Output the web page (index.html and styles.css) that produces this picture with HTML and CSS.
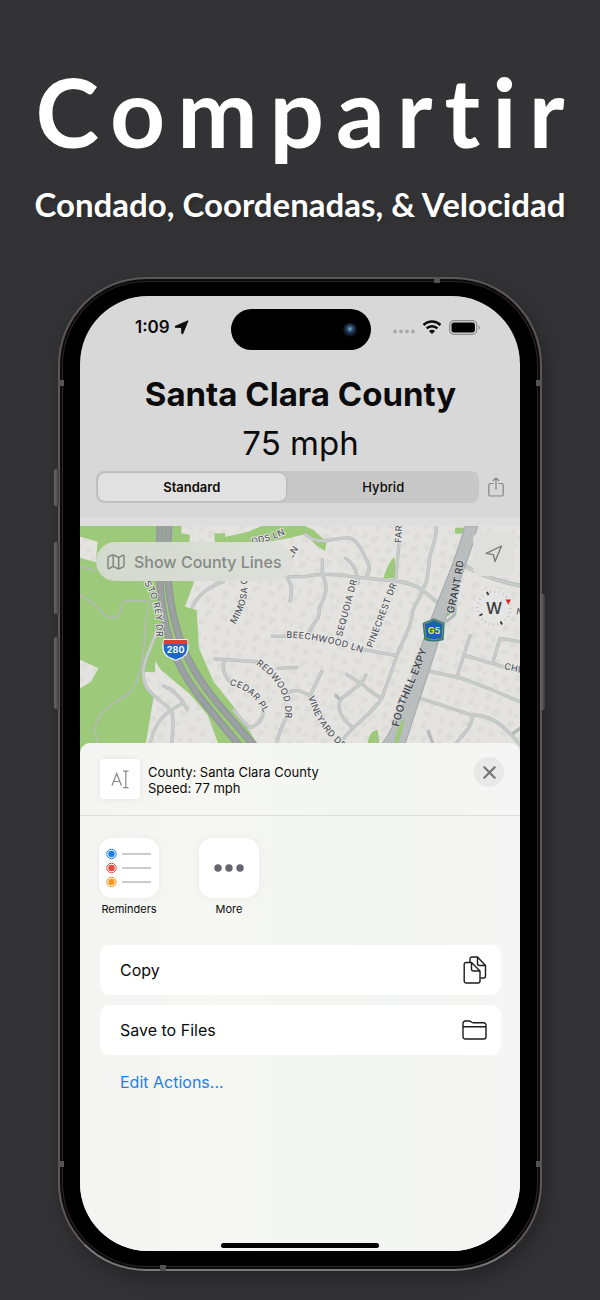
FILE: index.html
```html
<!DOCTYPE html>
<html lang="es">
  <head>
    <meta charset="utf-8" />
    <meta name="viewport" content="width=device-width, initial-scale=1" />
    <title>Compartir</title>
    <link rel="stylesheet" href="styles.css" />
  </head>
  <body>
    <header class="promo">
      <h1 class="promo-title">Compartir</h1>
      <p class="promo-subtitle">Condado, Coordenadas, &amp; Velocidad</p>
    </header>

    <main class="phone">
      <!-- side buttons and antenna bands -->
      <span class="side-key key-mute"></span>
      <span class="side-key key-up"></span>
      <span class="side-key key-down"></span>
      <span class="side-key key-power"></span>
      <span class="band band-left-top"></span>
      <span class="band band-right-top"></span>
      <span class="band band-left-bottom"></span>
      <span class="band band-right-bottom"></span>
      <span class="band band-top"></span>
      <span class="band band-bottom"></span>

      <div class="screen">
        <section class="top">
          <div class="status">
            <div class="status-side">
              <span class="clock">1:09</span>
              <svg width="15" height="15" viewBox="0 0 15 15"><path d="M14 .8 8.800 13.500C8.500 14.200 7.700 14.100 7.700 13.300V7.500L1.600 7.300C.8 7.300.7 6.500 1.400 6.200Z" fill="#0b0b0b" stroke="#0b0b0b" stroke-width=".9" stroke-linejoin="round" /></svg>
            </div>
            <div class="island"><span class="lens"></span></div>
            <div class="status-side status-right">
              <svg width="22" height="5" viewBox="0 0 22 5" fill="#aaa"><circle cx="2" cy="2.500" r="1.900" /><circle cx="8" cy="2.500" r="1.900" /><circle cx="14" cy="2.500" r="1.900" /><circle cx="20" cy="2.500" r="1.900" /></svg>
              <svg class="wifi" width="20" height="15" viewBox="0 0 20 15"><path d="M1.500 5C6.300.3 13.700.3 18.500 5M4.600 8.300c3.100-2.900 7.700-2.900 10.800 0" fill="none" stroke="#0b0b0b" stroke-width="2.500" /><path d="M6.900 10.900c1.800-1.600 4.400-1.600 6.200 0L10 14Z" fill="#0b0b0b" /></svg>
              <svg width="32" height="15" viewBox="0 0 32 15"><rect x=".7" y=".7" width="27" height="13.600" rx="4.300" fill="none" stroke="#8c8c8c" stroke-width="1.200" /><rect x="2.500" y="2.500" width="23.400" height="10" rx="2.700" fill="#000" /><path d="M29.500 5.200c1.900.8 1.900 3.800 0 4.600Z" fill="#8c8c8c" /></svg>
            </div>
          </div>

          <h2 class="county">Santa Clara County</h2>
          <p class="speed">75 mph</p>

          <div class="toolbar">
            <div class="segmented">
              <label class="segment"><input type="radio" name="map-type" checked /><span>Standard</span></label>
              <label class="segment"><input type="radio" name="map-type" /><span>Hybrid</span></label>
            </div>
            <button class="share" type="button" aria-label="Share">
              <svg width="18" height="20" viewBox="0 0 18 20" fill="none" stroke="#858585" stroke-width="1.200" stroke-linecap="round" stroke-linejoin="round"><path d="M6 6.500H3.400A1.600 1.600 0 0 0 1.800 8.100V17.400A1.600 1.600 0 0 0 3.400 19H14.600A1.600 1.600 0 0 0 16.200 17.400V8.100A1.600 1.600 0 0 0 14.600 6.500H12M9 12.500V1M6.200 3.700 9 1 11.800 3.700" /></svg>
            </button>
          </div>
        </section>

        <section class="map">
          <svg class="map-canvas" viewBox="15 33 1320 681" preserveAspectRatio="xMidYMin slice">
            <defs>
              <pattern id="houses" width="120" height="104" patternUnits="userSpaceOnUse" patternTransform="rotate(14)">
                <path d="M8 8h18v14h-9v8H8ZM44 14h14v18H44ZM78 5h22v13H78ZM12 46h14v18H12ZM40 52h22v12h-7v8H40ZM80 38h15v20H80ZM102 52h12v12h-12ZM18 82h22v13H18ZM60 84h14v13H60ZM90 76h20v12h-8v8H90Z" fill="#dcdcd9" />
              </pattern>
              <path id="monte" d="M207 204C232 242 246 290 243 356V440" />
              <path id="woods" d="M530 88Q575 83 620 62L690 30" />
              <path id="mimosa" d="M480 328C502 296 522 250 516 190L500 120" />
              <path id="beech" d="M634 368Q730 370 850 410L950 443" />
              <path id="redwood" d="M543 448C590 480 632 525 630 592V680" />
              <path id="cedar" d="M463 510Q525 523 555 574L595 650" />
              <path id="vineyard" d="M700 545C715 600 740 645 790 690L850 745" />
              <path id="foothill" d="M972 636C985 560 1025 500 1058 398L1090 300" />
              <path id="grant" d="M1136 296C1145 250 1160 195 1166 134L1174 50" />
            </defs>

            <rect x="0" y="0" width="1350" height="730" fill="#e4e3e0" />
            <rect x="0" y="0" width="1350" height="730" fill="url(#houses)" />

            <!-- parks -->
            <g fill="#9dca7a">
              <path d="M15 33H320L318 55 345 60 343 85 356 205 330 275 365 285 372 400 416 500 480 580 565 714H15Z" />
              <path d="M418 55H450V66L520 50 560 33H690L715 45 755 80 750 108 725 92 690 58 640 70 560 84 420 88Z" />
              <path d="M958 125 967 190H925Q940 140 958 125ZM1140 38H1170L1160 56H1140ZM878 690Q880 648 908 645L914 690ZM1100 310 1105 285 1132 250 1125 300Z" />
            </g>
            <path d="M15 65 68 80 62 142 15 128ZM15 434 70 460 48 500 15 520ZM240 438 258 465 345 538 398 600 440 714H208L236 545 204 500 207 470 240 472Z" fill="#e4e3e0" />
            <path d="M15 65 68 80 62 142 15 128ZM15 434 70 460 48 500 15 520ZM240 438 258 465 345 538 398 600 440 714H208L236 545 204 500 207 470 240 472Z" fill="url(#houses)" />

            <!-- streets: casing first, then a lighter fill -->
            <g fill="none" stroke-linecap="round" stroke-linejoin="round">
              <g stroke="#b3bab8" stroke-width="10">
                <path d="M15 155 60 168M15 240C70 260 80 310 115 308S125 256 160 257L225 258" stroke-width="5" />
                <path d="M225 262C200 330 218 410 190 480 175 560 120 540 75 600 55 630 60 650 68 690" stroke-width="5" />
                <path d="M243 350C230 400 205 430 204 475 205 540 260 550 290 590 300 620 290 650 290 700" />
                <path d="M268 514C300 525 320 550 337 584M325 565C270 590 240 620 224 690" />
                <path d="M352 276C370 240 400 215 445 200M628 185H690C740 172 800 180 860 188L960 198C1020 205 1040 220 1085 262" />
                <path d="M640 195Q655 215 645 258M592 364H630M420 432 545 440M610 460 665 457M447 440C440 470 455 490 465 500" />
                <path d="M563 570C570 600 560 625 525 638 500 620 490 600 476 585M636 590C635 620 610 640 605 690M640 532Q665 518 705 542L740 470" />
                <path d="M690 58C740 100 780 60 830 70 860 90 865 120 882 150 885 165 880 175 875 184M742 135V178C760 210 755 240 732 280 738 320 710 320 704 352M812 130C840 150 845 170 850 205" />
                <path d="M972 84 962 198M1084 33C1085 90 1060 110 1062 150 1055 190 1060 200 1040 225 1040 255 1010 270 1012 300 1000 360 975 390 965 424 950 470 935 510 920 550 890 600 840 620 790 690" />
                <path d="M845 400 965 422M815 478 865 510C880 525 900 540 920 550M873 480C860 515 820 530 795 555 785 590 805 615 830 635M783 542 797 555" />
                <path d="M1060 468 1160 490 1240 520 1335 560M1030 548 1190 600C1240 600 1280 620 1335 690M1185 362 1145 488M1172 422 1335 470M1254 440 1275 370 1335 380M1192 605C1190 640 1160 660 1140 690M1060 650 1075 690M1310 658 1335 640" />
                <path d="M1175 155Q1230 190 1335 212" stroke-width="12" />
              </g>
              <g stroke="#c8cdcb" stroke-width="7">
                <path d="M243 350C230 400 205 430 204 475 205 540 260 550 290 590 300 620 290 650 290 700" />
                <path d="M268 514C300 525 320 550 337 584M325 565C270 590 240 620 224 690M352 276C370 240 400 215 445 200M628 185H690C740 172 800 180 860 188L960 198C1020 205 1040 220 1085 262" />
                <path d="M640 195Q655 215 645 258M592 364H630M420 432 545 440M610 460 665 457M447 440C440 470 455 490 465 500M563 570C570 600 560 625 525 638 500 620 490 600 476 585M636 590C635 620 610 640 605 690M640 532Q665 518 705 542L740 470" />
                <path d="M690 58C740 100 780 60 830 70 860 90 865 120 882 150 885 165 880 175 875 184M742 135V178C760 210 755 240 732 280 738 320 710 320 704 352M812 130C840 150 845 170 850 205" />
                <path d="M972 84 962 198M1084 33C1085 90 1060 110 1062 150 1055 190 1060 200 1040 225 1040 255 1010 270 1012 300 1000 360 975 390 965 424 950 470 935 510 920 550 890 600 840 620 790 690" />
                <path d="M845 400 965 422M815 478 865 510C880 525 900 540 920 550M873 480C860 515 820 530 795 555 785 590 805 615 830 635M1060 468 1160 490 1240 520 1335 560M1030 548 1190 600C1240 600 1280 620 1335 690" />
                <path d="M1185 362 1145 488M1172 422 1335 470M1254 440 1275 370 1335 380M1192 605C1190 640 1160 660 1140 690M1175 155Q1230 190 1335 212" />
              </g>
            </g>

            <!-- expressway -->
            <path d="M1170 33 1208 33C1180 150 1120 270 1096 360 1070 450 1030 560 982 714H900C960 640 990 560 1024 450 1050 330 1130 180 1170 33Z" fill="#b9bdbe" stroke="#a0a7a8" stroke-width="3" />
            <path d="M958 684Q965 630 990 606L978 660 968 690Z" fill="#9dca7a" />
            <path d="M1086 330Q1120 320 1138 300 1146 270 1130 250" fill="none" stroke="#b4bbbb" stroke-width="10" />

            <!-- interstate -->
            <g fill="none" stroke="#8e9697" stroke-width="22">
              <path d="M256 33C248 170 252 300 300 420 340 520 420 600 500 700" />
              <path d="M281 33C272 150 275 270 325 400 370 510 450 590 545 700" />
            </g>
            <g fill="none" stroke="#9ba1a2" stroke-width="15">
              <path d="M256 33C248 170 252 300 300 420 340 520 420 600 500 700" />
              <path d="M281 33C272 150 275 270 325 400 370 510 450 590 545 700" />
            </g>

            <!-- street names -->
            <g class="street-names">
              <text><textPath href="#monte">STO REY DR</textPath></text>
              <text><textPath href="#woods">ODS LN</textPath></text>
              <text transform="translate(650 132) rotate(-55)">LN</text>
              <text><textPath href="#mimosa">MIMOSA C</textPath></text>
              <text><textPath href="#beech">BEECHWOOD LN</textPath></text>
              <text><textPath href="#redwood">REDWOOD DR</textPath></text>
              <text><textPath href="#cedar">CEDAR PL</textPath></text>
              <text><textPath href="#vineyard">VINEYARD DR</textPath></text>
              <text transform="translate(801 366) rotate(-75)">SEQUOIA DR</text>
              <text transform="translate(892 400) rotate(-69)">PINECREST DR</text>
              <text transform="translate(979 84) rotate(-88)">FAR</text>
              <text transform="translate(1286 462) rotate(12)">CHU</text>
              <text transform="translate(1322 298) rotate(12)">N</text>
              <g class="main-names">
                <text><textPath href="#foothill">FOOTHILL EXPY</textPath></text>
                <text><textPath href="#grant">GRANT RD</textPath></text>
              </g>
            </g>

            <!-- route shields -->
            <path d="M267 374H336Q346 412 324 426L302 436 280 426Q256 412 267 374Z" fill="#1c68c9" stroke="#e9edf2" stroke-width="4" />
            <path d="M267 375H336L338 388H265Z" fill="#d43f3a" />
            <text class="shield" x="302" y="415">280</text>
            <path d="M1077 313 1106 326 1103 373Q1077 380 1051 373L1046 326Z" fill="#1c62ae" stroke="#34727c" stroke-width="6" stroke-linejoin="round" />
            <path d="M1077 314 1104 327 1101 371Q1077 377 1053 371L1048 327Z" fill="none" stroke="#b9bd50" stroke-width="1.500" />
            <text class="shield county-route" x="1077" y="356">G5</text>
          </svg>

          <div class="map-controls">
            <button class="county-lines" type="button">
              <svg width="18" height="16" viewBox="0 0 18 16" fill="none" stroke="#7d807d" stroke-width="1.400" stroke-linejoin="round"><path d="M1 3.500Q1 2.900 1.600 2.600L5 1.100Q6 .7 7 1.200L10.800 3.100Q11.700 3.600 12.600 3.100L15.600 1.400Q17 .8 17 2.100V11.700Q17 12.500 16.400 12.800L12.600 14.700Q11.700 15.100 10.800 14.700L7 12.900Q6 12.400 5 12.900L2.400 14.400Q1 15 1 13.800ZM6.200 1V12.500M11.700 3.500V15" /></svg>
              <span>Show County Lines</span>
            </button>
            <div class="map-tools">
              <button class="locate" type="button" aria-label="Locate">
                <svg width="18" height="18" viewBox="0 0 18 18" fill="none" stroke="#777" stroke-width="1.300" stroke-linejoin="round"><path d="M16.500 1 10 16.500 8.400 9.700 1.200 8.300Z" /></svg>
              </button>
              <button class="compass" type="button" aria-label="Compass">
                <svg class="dial" width="40" height="40" viewBox="0 0 40 40"><circle cx="20" cy="20" r="16.500" fill="none" stroke="#b4b4b4" stroke-width="3" stroke-dasharray=".6 3.720" /><path d="M13 4 14.500 7M26.500 33.500 28 36.500M5.500 27.500 8.500 26" stroke="#333" stroke-width="1.700" /><path d="M31.500 11.600H37L34.300 16.500Z" fill="#d61f26" /></svg>
                <span>W</span>
              </button>
            </div>
          </div>
        </section>

        <section class="sheet">
          <div class="preview">
            <div class="thumb">
              <svg width="19" height="19" viewBox="0 0 19 19" fill="none" stroke="#898989" stroke-width="1.200"><path d="M1 15.500 5.700 3.500 10.400 15.500M2.500 11.500H9M12 1.100H17.500M14.800 1V17.700M12 17.700H17.500" /></svg>
            </div>
            <p class="preview-text">County: Santa Clara County<br />Speed: 77 mph</p>
            <button class="close" type="button" aria-label="Close">
              <svg width="13" height="13" viewBox="0 0 13 13" stroke="#747476" stroke-width="2.200" stroke-linecap="round"><path d="M1.300 1.300 11.700 11.700M11.700 1.300 1.300 11.700" /></svg>
            </button>
          </div>

          <div class="apps">
            <button class="app" type="button">
              <span class="app-icon">
                <svg width="60" height="60" viewBox="0 0 60 60"><g fill="none" stroke-width="1"><circle cx="12.500" cy="16" r="4.700" stroke="#1a7df2" /><circle cx="12.500" cy="30" r="4.700" stroke="#e9493f" /><circle cx="12.500" cy="44" r="4.700" stroke="#f8981d" /></g><circle cx="12.500" cy="16" r="3.200" fill="#1a7df2" /><circle cx="12.500" cy="30" r="3.200" fill="#e9493f" /><circle cx="12.500" cy="44" r="3.200" fill="#f8981d" /><path d="M23 16H52M23 30H52M23 44H52" stroke="#bbbcc0" stroke-width="1.300" /></svg>
              </span>
              <span>Reminders</span>
            </button>
            <button class="app" type="button">
              <span class="app-icon">
                <svg width="60" height="60" viewBox="0 0 60 60" fill="#66656e"><circle cx="19" cy="30" r="3.700" /><circle cx="30" cy="30" r="3.700" /><circle cx="41" cy="30" r="3.700" /></svg>
              </span>
              <span>More</span>
            </button>
          </div>

          <div class="actions">
            <button class="action" type="button">
              <span>Copy</span>
              <svg width="24" height="28" viewBox="0 0 24 28" fill="none" stroke="#1b1b1b" stroke-width="1.400" stroke-linejoin="round"><path d="M7 6.500V3A2 2 0 0 1 9 1H14.500L22.500 9.500V20A2 2 0 0 1 20.500 22H17.500M14.500 1V7.500A2 2 0 0 0 16.500 9.500H22.500" /><path d="M3.200 6.500H8.500L17 15V25A2 2 0 0 1 15 27H3.200A2 2 0 0 1 1.200 25V8.500A2 2 0 0 1 3.200 6.500ZM8.500 6.500V13A2 2 0 0 0 10.500 15H17" /></svg>
            </button>
            <button class="action" type="button">
              <span>Save to Files</span>
              <svg width="25" height="20" viewBox="0 0 25 20" fill="none" stroke="#1b1b1b" stroke-width="1.400" stroke-linejoin="round"><path d="M1 6.800V3.300A2.300 2.300 0 0 1 3.300 1H7.200Q8.200 1 9 1.700L9.800 2.300Q10.500 2.800 11.500 2.800H21.700A2.300 2.300 0 0 1 24 5.100V16.700A2.300 2.300 0 0 1 21.700 19H3.300A2.300 2.300 0 0 1 1 16.700ZM1 6.800H24" /></svg>
            </button>
            <a class="edit" href="#">Edit Actions...</a>
          </div>

          <div class="home-bar"></div>
        </section>
      </div>
    </main>
  </body>
</html>
```

FILE: styles.css
```css
* {
  box-sizing: border-box;
}

body {
  margin: 0;
  min-height: 100vh;
  padding-bottom: 28px;
  background-color: #333335;
  font-family: Inter, "Liberation Sans", sans-serif;
  color: #0b0b0b;
}

h1,
h2,
p {
  margin: 0;
}

svg {
  display: block;
  flex-shrink: 0;
}

button {
  border: 0;
  padding: 0;
  background: none;
  font: inherit;
  color: inherit;
  cursor: pointer;
}

/* headline */
.promo {
  padding-top: 46px;
  text-align: center;
  color: #fff;
  font-family: Lato, "Open Sans", sans-serif;
  font-weight: 700;
}

.promo-title {
  padding-left: 12px;
  font-size: 96px;
  line-height: 130px;
  letter-spacing: 12px;
  white-space: nowrap;
}

.promo-subtitle {
  padding: 8px 0 53px;
  font-size: 33px;
  line-height: 40px;
  text-shadow: 2px 3px 5px rgba(0, 0, 0, 0.2);
}

/* phone body */
.phone {
  position: relative;
  width: calc(100% - 116px);
  max-width: 484px;
  margin: 0 auto;
  padding: 17px 20px 18px;
  border: 2px solid #5c5858;
  border-bottom-color: #777;
  border-radius: 88px;
  background-color: #000;
  box-shadow: inset 0 0 0 2px #0c0a0a, inset 0 0 0 3px #2b2526, 4px 8px 18px rgba(0, 0, 0, 0.3);
}

.side-key {
  position: absolute;
  left: -6px;
  width: 5px;
  border-radius: 2px 0 0 2px;
  background: linear-gradient(to right, #6b6869, #3f3e3f);
}

.key-mute {
  top: 190px;
  height: 37px;
}

.key-up {
  top: 263px;
  height: 72px;
}

.key-down {
  top: 358px;
  height: 72px;
}

.key-power {
  top: 315px;
  right: -5px;
  left: auto;
  height: 116px;
  border-radius: 0 2px 2px 0;
}

.band {
  position: absolute;
  width: 6px;
  height: 6px;
  background-color: #545253;
}

.band-left-top {
  top: 101px;
  left: -2px;
}

.band-right-top {
  top: 101px;
  right: -2px;
}

.band-left-bottom {
  bottom: 102px;
  left: -2px;
}

.band-right-bottom {
  bottom: 102px;
  right: -2px;
}

.band-top {
  top: -2px;
  right: 100px;
}

.band-bottom {
  bottom: -2px;
  left: 100px;
}

.screen {
  overflow: hidden;
  border-radius: 68px;
  background-color: #d8d8d8;
}

/* status bar and county info */
.top {
  padding: 13px 15px 14px 16px;
}

.status {
  display: grid;
  grid-template-columns: 1fr 140px 1fr;
  height: 42px;
}

.status-side {
  display: flex;
  align-items: center;
  gap: 4px;
  height: 36px;
  padding-left: 39px;
}

.status-right {
  justify-content: flex-end;
  gap: 7px;
  padding: 0 24px 0 0;
}

.status-right svg:first-child {
  margin-top: 8px;
}

.clock {
  font-size: 17px;
  font-weight: 600;
}

.island {
  display: flex;
  align-items: center;
  justify-content: flex-end;
  height: 41px;
  padding-right: 14px;
  border-radius: 21px;
  background-color: #000;
}

.lens {
  width: 14px;
  height: 14px;
  border-radius: 50%;
  background: radial-gradient(circle at 50% 42%, #7fb0d6 0, #27486b 28%, #0f1a28 55%, #070a0e 75%);
}

.county {
  padding-top: 20px;
  font-size: 33px;
  line-height: 46px;
  font-weight: 700;
  text-align: center;
}

.speed {
  padding: 4px 0 6px;
  font-size: 33px;
  line-height: 44px;
  text-align: center;
}

.toolbar {
  display: flex;
  align-items: center;
  gap: 8px;
}

.segmented {
  display: flex;
  flex: 1;
  gap: 4px;
  height: 32px;
  padding: 2px;
  border-radius: 8px;
  background-color: #c8c8c8;
}

.segment {
  display: flex;
  flex: 1;
  position: relative;
}

.segment input {
  position: absolute;
  inset: 0;
  margin: 0;
  opacity: 0;
}

.segment span {
  display: flex;
  flex: 1;
  align-items: center;
  justify-content: center;
  border-radius: 7px;
  font-size: 13px;
  font-weight: 500;
}

.segment input:checked + span {
  background-color: #e1e1e1;
  box-shadow: 0 0 3px rgba(0, 0, 0, 0.18);
  font-weight: 600;
}

/* map, its last 10px lie behind the rounded corners of the sheet */
.map {
  display: grid;
  height: 236px;
  margin-bottom: -10px;
  border-top: 9px solid #dedede;
  overflow: hidden;
}

.map-canvas,
.map-controls {
  grid-area: 1 / 1;
  min-width: 0;
}

.map-canvas {
  width: 100%;
  height: 227px;
}

.street-names {
  font-size: 27px;
  font-weight: 500;
  letter-spacing: 1px;
  fill: #55585f;
  stroke: #ecebe8;
  stroke-width: 5px;
  paint-order: stroke;
}

.main-names {
  font-size: 30px;
  fill: #3b3f47;
  stroke: #c6c9ca;
}

.shield {
  font-size: 27px;
  font-weight: 700;
  text-anchor: middle;
  fill: #fff;
}

.county-route {
  fill: #e4e04c;
}

.map-controls {
  display: flex;
  align-items: flex-start;
  justify-content: space-between;
  position: relative;
  padding: 6px 5px 0 16px;
}

.county-lines {
  display: flex;
  align-items: center;
  gap: 9px;
  height: 39px;
  margin-top: 10px;
  padding: 0 11px;
  border-radius: 20px;
  background: linear-gradient(to right, #d3dacd, #dedfdb);
  font-size: 16px;
  font-weight: 500;
  color: #858985;
}

.map-tools {
  display: flex;
  flex-direction: column;
  align-items: center;
  gap: 12px;
}

.locate {
  display: grid;
  place-items: center;
  width: 42px;
  height: 44px;
  border-radius: 8px;
  background-color: #dfdfdd;
}

.compass {
  display: grid;
  place-items: center;
  width: 40px;
  height: 40px;
  border-radius: 50%;
  background-color: #e5e5e3;
  font-size: 16px;
  font-weight: 500;
  color: #3a3a3a;
}

.compass > * {
  grid-area: 1 / 1;
}

/* share sheet */
.sheet {
  position: relative;
  height: 508px;
  border-radius: 10px 10px 0 0;
  background: linear-gradient(to right, #f4f5f3, #f6f7f2 30%, #f3f5f1 65%, #f5f5f5);
}

.preview {
  display: flex;
  align-items: center;
  gap: 8px;
  height: 73px;
  padding: 0 16px 0 20px;
  border-bottom: 1px solid #dcdddb;
}

.thumb {
  display: grid;
  place-items: center;
  width: 40px;
  height: 40px;
  border-radius: 3px;
  background-color: #fff;
  box-shadow: 0 0 6px rgba(0, 0, 0, 0.08);
}

.preview-text {
  flex: 1;
  padding-top: 2px;
  font-size: 13px;
  line-height: 16px;
}

.close {
  display: grid;
  place-items: center;
  align-self: flex-start;
  width: 30px;
  height: 30px;
  margin-top: 14px;
  border-radius: 50%;
  background-color: #e7e8e7;
}

.apps {
  display: flex;
  gap: 40px;
  padding: 22px 19px 0;
}

.app {
  display: flex;
  flex-direction: column;
  align-items: center;
  gap: 3px;
  width: 60px;
  font-size: 11px;
  line-height: 16px;
}

.app-icon {
  border-radius: 14px;
  background-color: #fff;
  box-shadow: 0 0 8px rgba(0, 0, 0, 0.05);
}

.actions {
  display: flex;
  flex-direction: column;
  gap: 10px;
  padding: 28px 19px 0 20px;
}

.action {
  display: flex;
  align-items: center;
  justify-content: space-between;
  height: 50px;
  padding: 0 14px 0 20px;
  border-radius: 9px;
  background-color: #fff;
  font-size: 16px;
}

.edit {
  align-self: flex-start;
  margin-left: 20px;
  padding-top: 6px;
  font-size: 16px;
  line-height: 22px;
  color: #1f7fe5;
  text-decoration: none;
}

.home-bar {
  position: absolute;
  bottom: 3px;
  left: 50%;
  width: 158px;
  height: 5px;
  margin-left: -79px;
  border-radius: 3px;
  background-color: #000;
}
```
